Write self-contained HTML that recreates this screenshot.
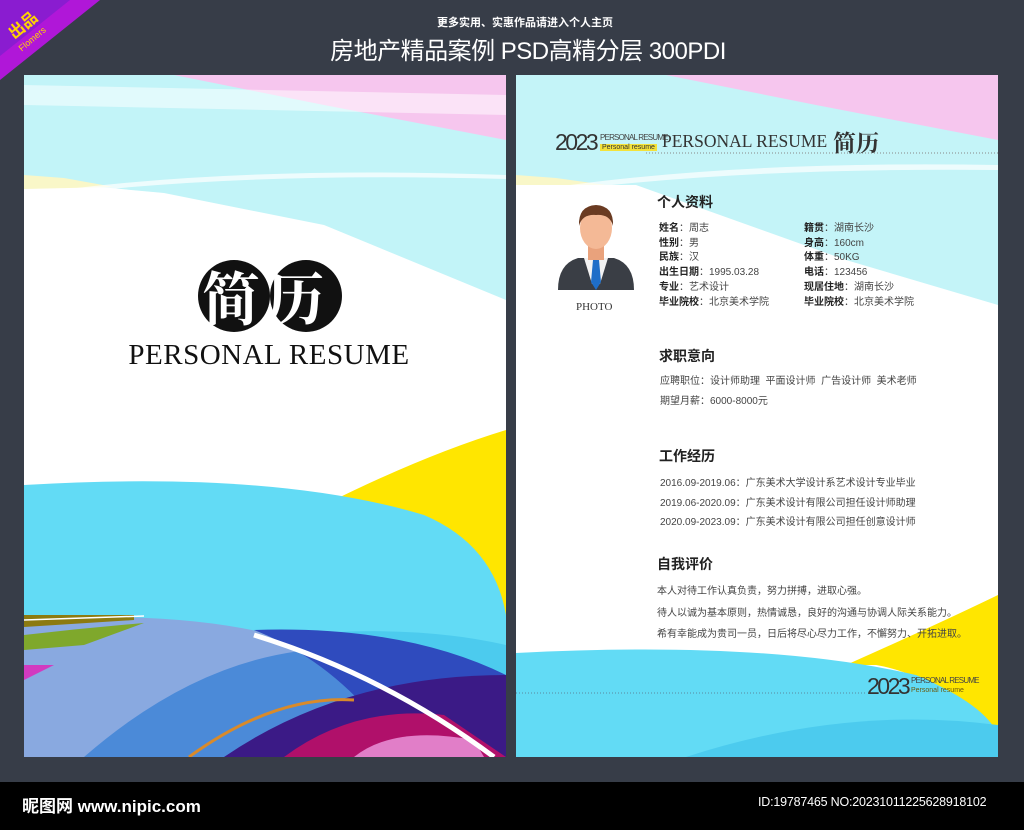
<!DOCTYPE html>
<html><head><meta charset="utf-8"><style>
*{margin:0;padding:0;box-sizing:border-box}
body{width:1024px;height:830px;background:#373d48;position:relative;overflow:hidden;font-family:"Liberation Sans","Noto Sans CJK SC",sans-serif}
.abs{position:absolute}
.page{position:absolute;top:75px;width:482px;height:682px;background:#fff;overflow:hidden}
.info{font-size:10px;color:#444;line-height:14.7px}
.info b{color:#222}
.h{font-size:14px;font-weight:bold;color:#222}
.t{font-size:10px;color:#444}
</style></head><body>
<svg class="abs" style="left:0;top:0" width="100" height="80"><polygon points="0,0 100,0 0,80" fill="#b017d8"/><polygon points="0,0 70,0 0,56" fill="#8a1cd0"/></svg>
<div class="abs" style="left:6px;top:12px;color:#ffd400;font-size:16px;font-weight:bold;transform:rotate(-40deg)">出品</div>
<div class="abs" style="left:16px;top:34px;color:#ffd400;font-size:9px;transform:rotate(-40deg)">Flomers</div>
<div class="abs" style="left:0;width:1050px;top:14px;text-align:center;color:#fff;font-size:11px;font-weight:bold">更多实用、实惠作品请进入个人主页</div>
<div class="abs" style="left:0;width:1056px;top:31px;text-align:center;color:#fff;font-size:24px;letter-spacing:-0.5px">房地产精品案例 PSD高精分层 300PDI</div>

<div class="page" style="left:24px">
<svg class="abs" style="left:0;top:0" width="482" height="682">
<polygon points="0,0 482,0 482,225 300,150 140,118 0,105" fill="#c2f4f8"/>
<polygon points="150,0 482,0 482,65 300,30" fill="#f6c6ee"/>
<polygon points="0,10 482,20 482,40 0,30" fill="#fff" opacity="0.5"/>
<polygon points="0,100 40,103 90,112 0,114" fill="#f9f7c8"/>
<path d="M0,120 Q200,90 482,100 L482,104 Q200,96 0,124Z" fill="#fff" opacity=".7"/>
<path d="M300,430 Q400,380 482,355 L482,545 Q420,450 330,430Z" fill="#ffe600"/>
<path d="M0,410 Q250,395 400,440 Q470,470 482,540 L482,682 L0,682Z" fill="#62dbf5"/>
<path d="M170,575 Q350,540 482,570 L482,640 Q400,560 220,580Z" fill="#4ccbee"/>
<path d="M0,545 Q150,535 250,560 Q330,570 420,660 L420,682 L0,682Z" fill="#89a9e0"/>
<path d="M60,682 Q200,560 350,575 L420,682Z" fill="#4b8ad8"/>
<path d="M230,555 Q380,550 482,600 L482,682 L380,682 Q320,590 230,555Z" fill="#2f4bbe"/>
<path d="M200,682 Q320,600 482,600 L482,682Z" fill="#3b1a86"/>
<path d="M260,682 Q330,630 420,640 L482,682Z" fill="#b0106a"/>
<path d="M330,682 Q370,650 450,665 L460,682Z" fill="#e17ec8"/>
<path d="M165,682 Q250,620 330,625" stroke="#d98a2a" stroke-width="3" fill="none"/>
<path d="M230,560 Q360,600 470,682" stroke="#fff" stroke-width="5" fill="none"/>
<path d="M0,560 Q60,553 120,548 L60,570 L0,575Z" fill="#7fa82c"/>
<path d="M0,540 L110,540 L110,545 L0,552Z" fill="#8c7a10"/>
<path d="M0,590 L30,590 L0,605Z" fill="#d23ac0"/>
<path d="M0,545 L120,541" stroke="#fff" stroke-width="1.5"/>
</svg>
<div class="abs" style="left:174px;top:185px;width:72px;height:72px;border-radius:50%;background:#111"></div>
<div class="abs" style="left:246px;top:185px;width:72px;height:72px;border-radius:50%;background:#111"></div>
<div class="abs" style="left:178px;top:190px;color:#fff;font-size:58px;line-height:60px;font-family:'Noto Serif CJK SC',serif;font-weight:bold;letter-spacing:6px">简历</div>
<div class="abs" style="left:0;width:490px;top:264px;text-align:center;font-family:'Liberation Serif',serif;font-size:29px;letter-spacing:0.5px;color:#111">PERSONAL RESUME</div>
</div>

<div class="page" style="left:516px">
<svg class="abs" style="left:0;top:0" width="482" height="682">
<polygon points="0,0 482,0 482,230 330,185 120,110 0,110" fill="#c4f4f8"/>
<polygon points="150,0 482,0 482,65 300,30" fill="#f6c6ee"/>
<polygon points="0,100 40,103 90,110 0,112" fill="#f9f7c8"/>
<path d="M0,118 Q200,85 482,90 L482,95 Q200,92 0,122Z" fill="#fff" opacity=".7"/>
<polygon points="120,110 120,140 0,140 0,110" fill="#fff"/>
<path d="M330,590 Q420,550 482,520 L482,660 Q420,600 360,590Z" fill="#ffe600"/>
<path d="M0,578 Q250,565 400,600 Q470,630 482,660 L482,682 L0,682Z" fill="#62dbf5"/>
<path d="M170,682 Q330,630 482,650 L482,682Z" fill="#4ccbee"/>
<line x1="0" y1="618" x2="350" y2="618" stroke="#5a8aa0" stroke-dasharray="1,2"/>
<line x1="130" y1="78" x2="482" y2="78" stroke="#888" stroke-dasharray="1,2"/>
</svg>
<div class="abs" style="left:39px;top:54px;font-size:23px;letter-spacing:-2.5px;color:#333">2023</div>
<div class="abs" style="left:84px;top:58px;font-size:8px;color:#444;letter-spacing:-0.8px">PERSONAL RESUME</div>
<div class="abs" style="left:84px;top:69px;font-size:7px;background:#f3e23a;color:#333;padding:0 2px">Personal resume</div>
<div class="abs" style="left:146px;top:56px;font-family:'Liberation Serif',serif;font-size:17.5px;color:#333">PERSONAL RESUME</div>
<div class="abs" style="left:317px;top:50px;font-family:'Noto Serif CJK SC',serif;font-size:23px;font-weight:bold;color:#333">简历</div>

<svg class="abs" style="left:40px;top:127px" width="80" height="92">
<path d="M2,88 Q2,62 22,56 L58,56 Q78,62 78,88Z" fill="#3a3e45"/>
<polygon points="28,56 52,56 44,82 36,82" fill="#f2f2f2"/>
<polygon points="37,58 43,58 45,80 40,88 35,80" fill="#1f6ec8"/>
<rect x="32" y="44" width="16" height="14" fill="#e9a27c"/>
<ellipse cx="40" cy="26" rx="16" ry="21" fill="#f4b996"/>
<path d="M23,24 Q22,4 40,3 Q58,4 57,24 Q54,12 40,13 Q26,12 23,24Z" fill="#6a3b22"/>
</svg>
<div class="abs" style="left:60px;top:226px;font-family:'Liberation Serif',serif;font-size:11px;color:#333">PHOTO</div>

<div class="abs h" style="left:141px;top:117px">个人资料</div>
<div class="abs info" style="left:143px;top:147px"><b>姓名</b>：周志<br><b>性别</b>：男<br><b>民族</b>：汉<br><b>出生日期</b>：1995.03.28<br><b>专业</b>：艺术设计<br><b>毕业院校</b>：北京美术学院</div>
<div class="abs info" style="left:288px;top:147px"><b>籍贯</b>：湖南长沙<br><b>身高</b>：160cm<br><b>体重</b>：50KG<br><b>电话</b>：123456<br><b>现居住地</b>：湖南长沙<br><b>毕业院校</b>：北京美术学院</div>

<div class="abs h" style="left:143px;top:271px">求职意向</div>
<div class="abs t" style="left:144px;top:297px;line-height:20px">应聘职位：设计师助理&nbsp; 平面设计师&nbsp; 广告设计师&nbsp; 美术老师<br>期望月薪：6000-8000元</div>
<div class="abs h" style="left:143px;top:371px">工作经历</div>
<div class="abs t" style="left:144px;top:399px;line-height:19.5px">2016.09-2019.06：广东美术大学设计系艺术设计专业毕业<br>2019.06-2020.09：广东美术设计有限公司担任设计师助理<br>2020.09-2023.09：广东美术设计有限公司担任创意设计师</div>
<div class="abs h" style="left:141px;top:479px">自我评价</div>
<div class="abs t" style="left:141px;top:506px;line-height:21.5px">本人对待工作认真负责，努力拼搏，进取心强。<br>待人以诚为基本原则，热情诚恳，良好的沟通与协调人际关系能力。<br>希有幸能成为贵司一员，日后将尽心尽力工作，不懈努力、开拓进取。</div>
<div class="abs" style="left:351px;top:598px;font-size:23px;letter-spacing:-2.5px;color:#333">2023</div>
<div class="abs" style="left:395px;top:601px;font-size:8px;color:#444;letter-spacing:-0.8px">PERSONAL RESUME</div>
<div class="abs" style="left:395px;top:612px;font-size:7px;color:#6a5a10">Personal resume</div>
</div>

<div class="abs" style="left:0;top:782px;width:1024px;height:48px;background:#000"></div>
<div class="abs" style="left:22px;top:792px;color:#fff;font-size:17px;font-weight:bold">昵图网 www.nipic.com</div>
<div class="abs" style="left:758px;top:795px;color:#fff;font-size:12.5px;letter-spacing:-0.2px">ID:19787465 NO:20231011225628918102</div>
</body></html>
